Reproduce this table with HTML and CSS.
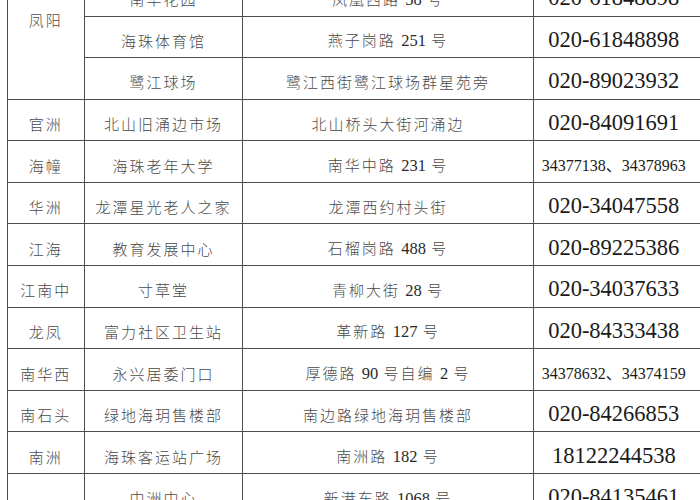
FILE: index.html
```html
<!DOCTYPE html>
<html lang="zh-CN">
<head>
<meta charset="utf-8">
<title>核酸采样点</title>
<link rel="stylesheet" href="styles.css">
</head>
<body>
<table class="sites">
  <colgroup>
    <col class="c-street">
    <col class="c-place">
    <col class="c-addr">
    <col class="c-phone">
  </colgroup>
  <tbody>
    <tr>
      <td class="street" rowspan="4">凤阳</td>
      <td>凤阳街社区卫生服务中心</td>
      <td>凤和大街 <span class="n">2</span> 号</td>
      <td class="phone">020-61848898</td>
    </tr>
    <tr>
      <td>南华花园</td>
      <td>凤凰西路 <span class="n">58</span> 号</td>
      <td class="phone">020-61848898</td>
    </tr>
    <tr>
      <td>海珠体育馆</td>
      <td>燕子岗路 <span class="n">251</span> 号</td>
      <td class="phone">020-61848898</td>
    </tr>
    <tr>
      <td>鹭江球场</td>
      <td>鹭江西街鹭江球场群星苑旁</td>
      <td class="phone">020-89023932</td>
    </tr>
    <tr>
      <td class="street">官洲</td>
      <td>北山旧涌边市场</td>
      <td>北山桥头大街河涌边</td>
      <td class="phone">020-84091691</td>
    </tr>
    <tr>
      <td class="street">海幢</td>
      <td>海珠老年大学</td>
      <td>南华中路 <span class="n">231</span> 号</td>
      <td class="phone small">34377138、34378963</td>
    </tr>
    <tr>
      <td class="street">华洲</td>
      <td>龙潭星光老人之家</td>
      <td>龙潭西约村头街</td>
      <td class="phone">020-34047558</td>
    </tr>
    <tr>
      <td class="street">江海</td>
      <td>教育发展中心</td>
      <td>石榴岗路 <span class="n">488</span> 号</td>
      <td class="phone">020-89225386</td>
    </tr>
    <tr>
      <td class="street">江南中</td>
      <td>寸草堂</td>
      <td>青柳大街 <span class="n">28</span> 号</td>
      <td class="phone">020-34037633</td>
    </tr>
    <tr>
      <td class="street">龙凤</td>
      <td>富力社区卫生站</td>
      <td>革新路 <span class="n">127</span> 号</td>
      <td class="phone">020-84333438</td>
    </tr>
    <tr>
      <td class="street">南华西</td>
      <td>永兴居委门口</td>
      <td>厚德路 <span class="n">90</span> 号自编 <span class="n">2</span> 号</td>
      <td class="phone small">34378632、34374159</td>
    </tr>
    <tr>
      <td class="street">南石头</td>
      <td>绿地海玥售楼部</td>
      <td>南边路绿地海玥售楼部</td>
      <td class="phone">020-84266853</td>
    </tr>
    <tr>
      <td class="street">南洲</td>
      <td>海珠客运站广场</td>
      <td>南洲路 <span class="n">182</span> 号</td>
      <td class="phone">18122244538</td>
    </tr>
    <tr>
      <td class="street" rowspan="2">琶洲</td>
      <td>中洲中心</td>
      <td>新港东路 <span class="n">1068</span> 号</td>
      <td class="phone">020-84135461</td>
    </tr>
    <tr>
      <td>琶洲会展公园</td>
      <td>新港东路 <span class="n">1000</span> 号</td>
      <td class="phone">020-89089321</td>
    </tr>
  </tbody>
</table>
</body>
</html>
```
FILE: styles.css
```css
html, body {
  margin: 0;
  padding: 0;
  background: #ffffff;
  overflow: hidden;
}

body {
  width: 700px;
  height: 500px;
}

.sites {
  border-collapse: collapse;
  table-layout: fixed;
  width: 720px;
  margin: -67.7px 0 0 6.5px;
  font-family: "Liberation Serif", "Noto Sans CJK SC", serif;
  color: #4a4a4a;
}

.c-street { width: 77.5px; }
.c-place  { width: 158px; }
.c-addr   { width: 291px; }
.c-phone  { width: 193.5px; }

.sites tr {
  height: 41.6px;
}

.sites td {
  border: 1px solid #4d4d4d;
  padding: 8px 0 0 0;
  text-align: center;
  vertical-align: middle;
  white-space: nowrap;
  overflow: hidden;
  font-family: "Noto Sans CJK SC", sans-serif;
  font-weight: 300;
  font-size: 15px;
  letter-spacing: 2px;
  line-height: 24px;
}

.sites td .n {
  font-family: "Liberation Serif", serif;
  font-weight: 400;
  font-size: 16.5px;
  letter-spacing: 0;
  color: #2a2a2a;
}

.sites td.phone {
  font-family: "Liberation Serif", "Noto Sans CJK SC", serif;
  font-weight: 400;
  font-size: 22.5px;
  letter-spacing: 0;
  color: #1a1a1a;
  padding-right: 33px;
  padding-top: 6px;
}

.sites td.phone.small {
  font-size: 16px;
  padding-top: 8px;
}
```
